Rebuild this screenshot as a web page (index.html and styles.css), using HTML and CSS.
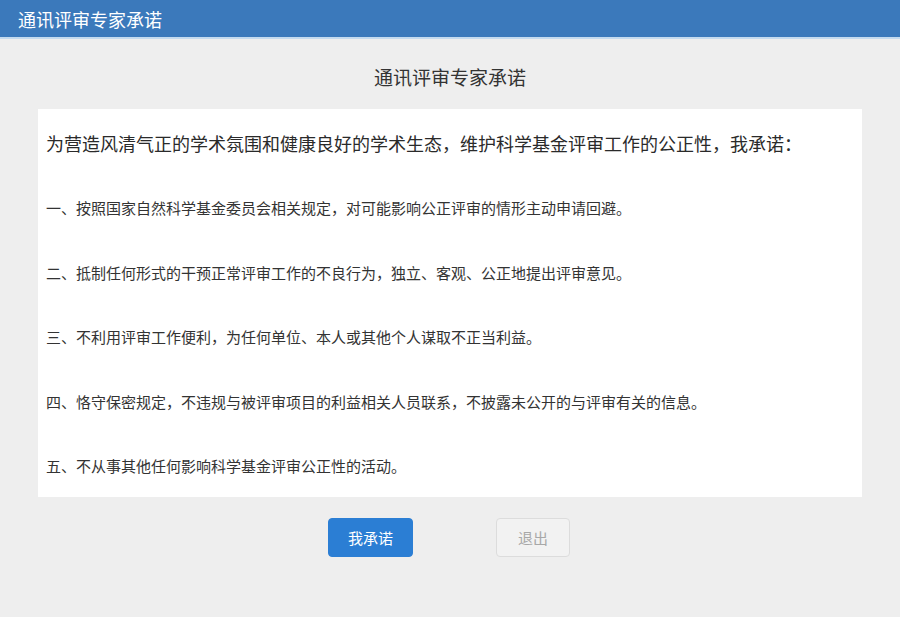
FILE: index.html
```html
<!DOCTYPE html>
<html lang="zh-CN">
<head>
<meta charset="utf-8">
<title>通讯评审专家承诺</title>
<link rel="stylesheet" href="styles.css">
</head>
<body>
<header class="topbar">
  <span class="topbar-title">通讯评审专家承诺</span>
</header>
<main class="page">
  <h2 class="page-title">通讯评审专家承诺</h2>
  <section class="panel">
    <p class="intro">为营造风清气正的学术氛围和健康良好的学术生态，维护科学基金评审工作的公正性，我承诺：</p>
    <p class="item">一、按照国家自然科学基金委员会相关规定，对可能影响公正评审的情形主动申请回避。</p>
    <p class="item">二、抵制任何形式的干预正常评审工作的不良行为，独立、客观、公正地提出评审意见。</p>
    <p class="item">三、不利用评审工作便利，为任何单位、本人或其他个人谋取不正当利益。</p>
    <p class="item">四、恪守保密规定，不违规与被评审项目的利益相关人员联系，不披露未公开的与评审有关的信息。</p>
    <p class="item">五、不从事其他任何影响科学基金评审公正性的活动。</p>
  </section>
  <div class="actions">
    <button class="btn btn-primary">我承诺</button>
    <button class="btn btn-disabled">退出</button>
  </div>
</main>
</body>
</html>
```
FILE: styles.css
```css
* { box-sizing: border-box; }
html, body {
  margin: 0;
  padding: 0;
}
body {
  background: #eeeeee;
  font-family: "Noto Sans CJK SC", "Noto Sans", sans-serif;
  color: #333;
  height: 617px;
  overflow: hidden;
}
.topbar {
  height: 39px;
  background: #3b79bb;
  border-bottom: 2px solid #c4dbef;
  display: flex;
  align-items: center;
  padding-left: 18px;
}
.topbar-title {
  color: #fff;
  font-size: 18px;
  line-height: 24px;
}
.page {
  display: flex;
  flex-direction: column;
}
.page-title {
  margin: 25px 0 0;
  text-align: center;
  font-size: 19px;
  line-height: 26px;
  font-weight: normal;
  color: #333;
}
.panel {
  margin: 19px 38px 0;
  background: #fff;
  padding: 22px 8px 21px;
}
.panel p { margin: 0; }
.intro {
  font-size: 18px;
  line-height: 24px;
  color: #2a2a2a;
}
.item {
  font-size: 15px;
  line-height: 20px;
  color: #333;
  margin-top: 44.5px !important;
}
.panel .intro + .item { margin-top: 43px !important; }
.actions {
  margin-top: 21px;
  display: flex;
  justify-content: center;
  gap: 83px;
  padding-right: 2px;
}
.btn {
  height: 39px;
  border-radius: 4px;
  font-family: inherit;
  font-size: 15px;
  padding: 0;
}
.btn-primary {
  width: 85px;
  background: #2b7ed4;
  border: 1px solid #2b7ed4;
  color: #fff;
}
.btn-disabled {
  width: 74px;
  background: #f2f2f2;
  border: 1px solid #dcdcdc;
  color: #a8a8a8;
}
```
